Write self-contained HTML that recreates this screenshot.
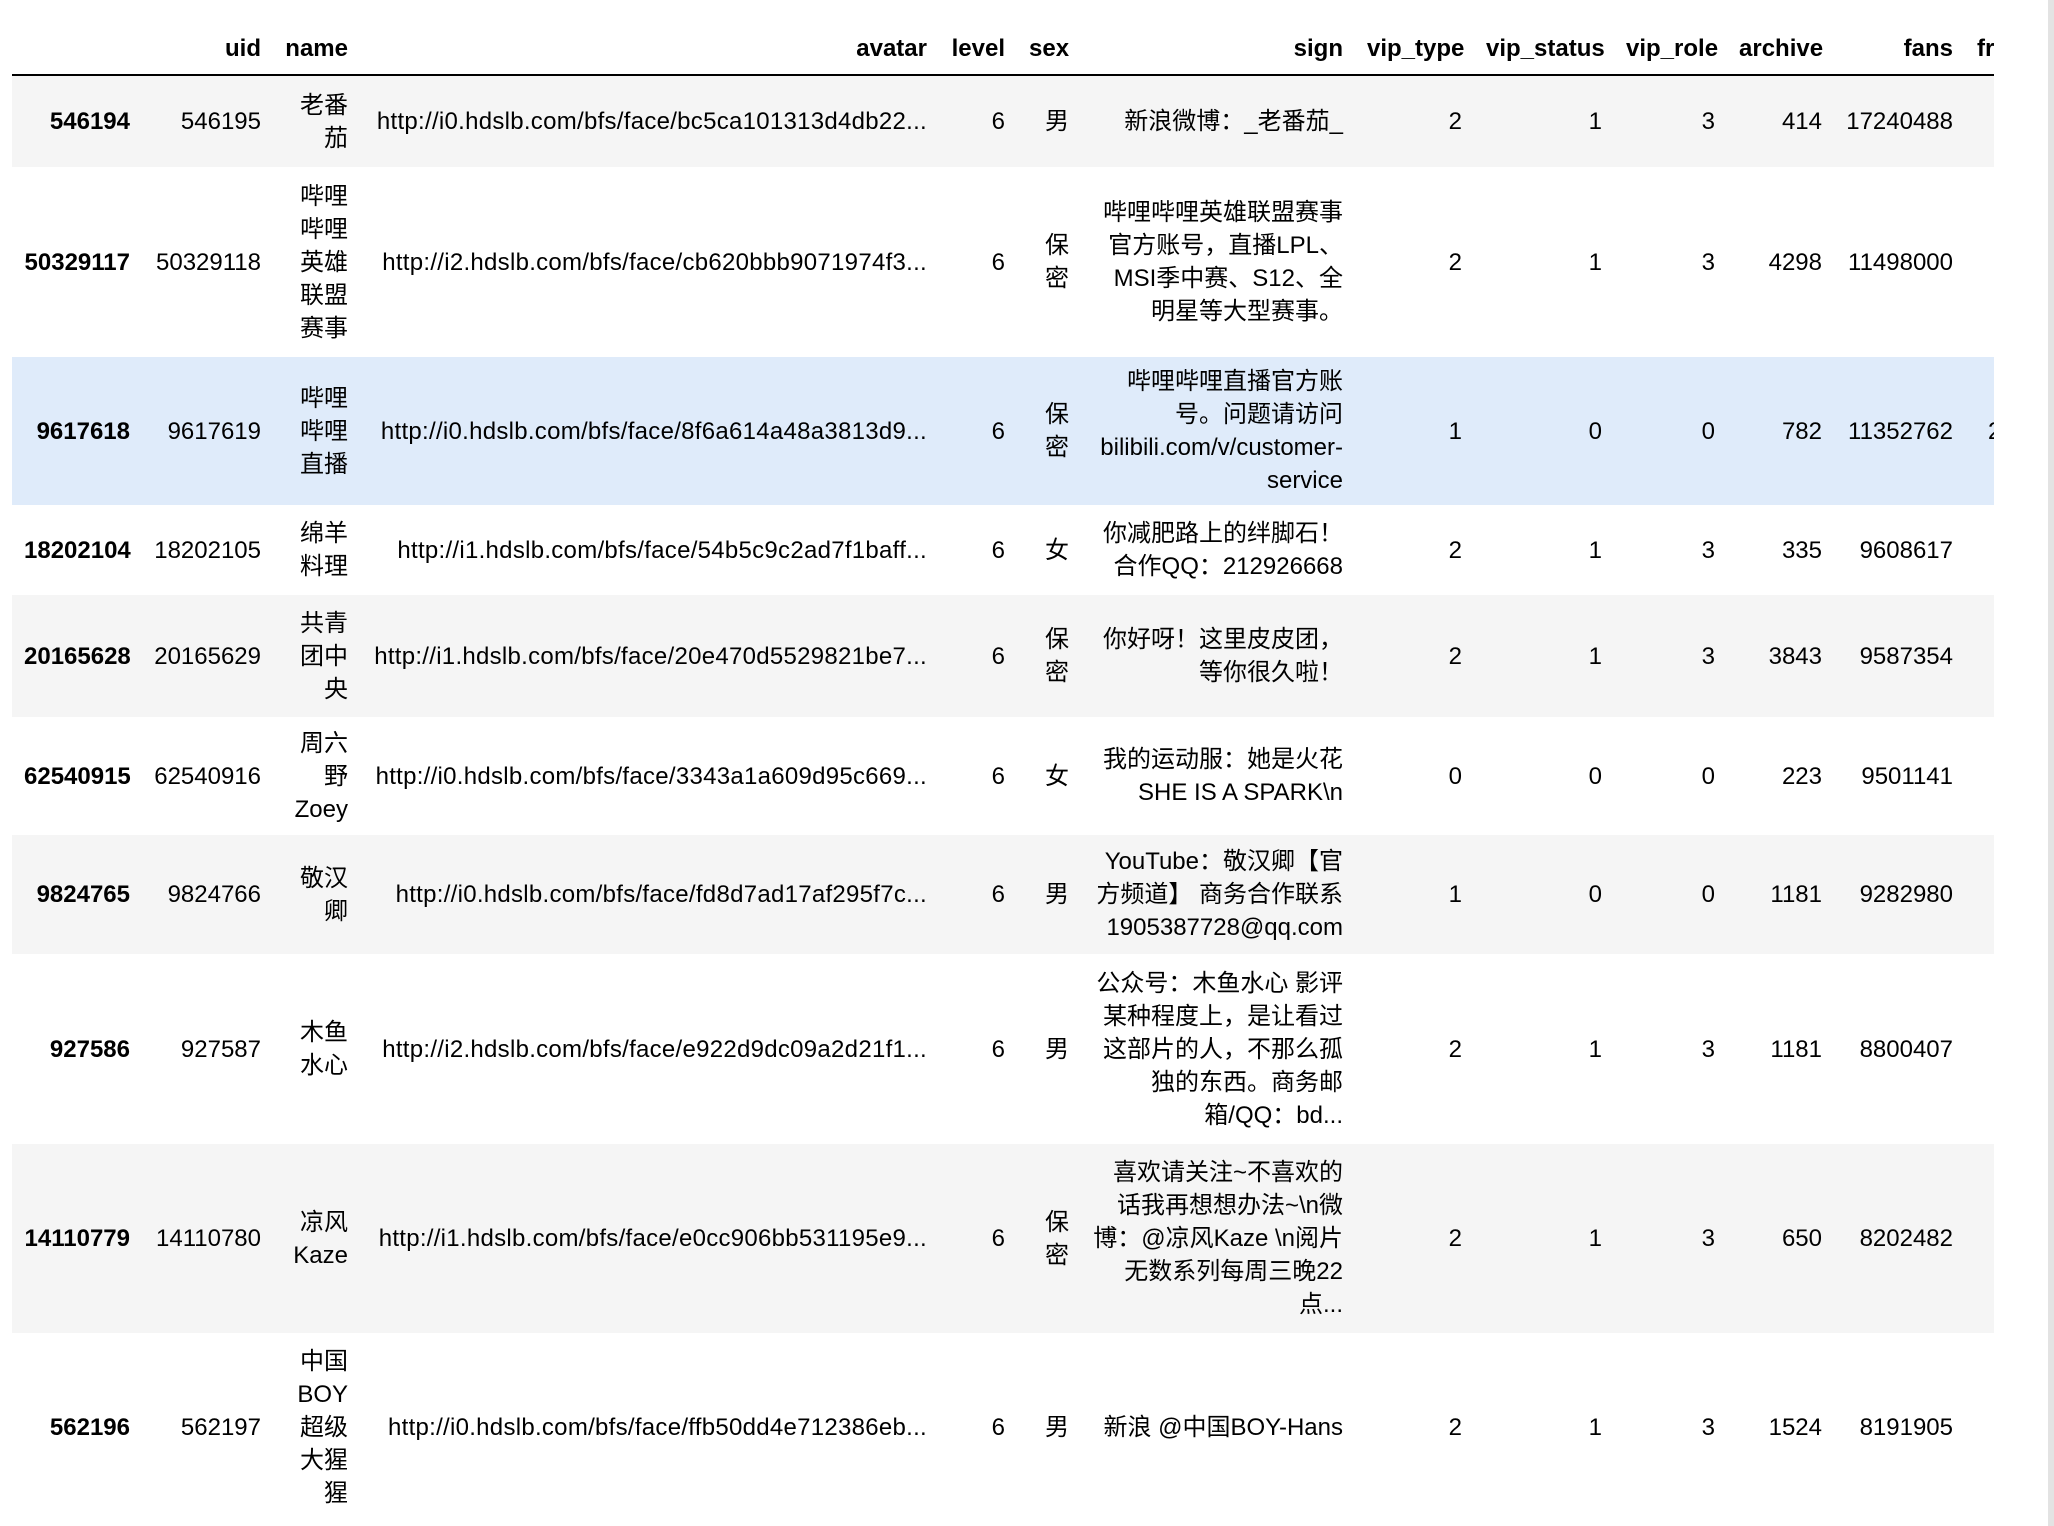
<!DOCTYPE html>
<html><head><meta charset="utf-8"><style>
html,body{margin:0;padding:0;background:#fff;width:2054px;height:1526px;overflow:hidden}
.wrap{position:absolute;left:12px;top:0;width:1982px;height:1526px;overflow:hidden}
.sb{position:absolute;left:2048px;top:0;width:6px;height:1526px;background:#e3e3e3}
table{border-collapse:collapse;table-layout:fixed;width:2100px;font-family:"Liberation Sans","Noto Sans CJK SC",sans-serif;font-size:24px;line-height:33px;color:#000}
td,th{padding:0 12px;text-align:right;vertical-align:middle;word-wrap:break-word}
thead th{height:63px;border-bottom:2px solid #000;vertical-align:bottom;padding-bottom:11px;padding-top:0;font-weight:bold;line-height:28px;white-space:nowrap;overflow:hidden}
tbody th{font-weight:bold;white-space:nowrap}
.nw{white-space:nowrap}
.av{white-space:nowrap;letter-spacing:0.28px}
tr.g{background:#f5f5f5}
tr.b{background:#dfebfa}
</style></head><body>
<div class="wrap">
<table>
<colgroup>
<col style="width:130px"><col style="width:131px"><col style="width:87px"><col style="width:579px"><col style="width:78px"><col style="width:64px"><col style="width:274px"><col style="width:119px"><col style="width:140px"><col style="width:113px"><col style="width:107px"><col style="width:131px"><col style="width:147px">
</colgroup>
<thead><tr><th></th><th>uid</th><th>name</th><th>avatar</th><th>level</th><th>sex</th><th>sign</th><th>vip_type</th><th>vip_status</th><th>vip_role</th><th>archive</th><th>fans</th><th style="text-align:left">friend</th></tr></thead>
<tbody>
<tr class="g" style="height:92px"><th>546194</th><td class="nw">546195</td><td>老番茄</td><td class="av">http://i0.hdslb.com/bfs/face/bc5ca101313d4db22...</td><td>6</td><td>男</td><td>新浪微博：_老番茄_</td><td>2</td><td>1</td><td>3</td><td>414</td><td>17240488</td><td></td></tr>
<tr style="height:190px"><th>50329117</th><td class="nw">50329118</td><td>哔哩哔哩英雄联盟赛事</td><td class="av">http://i2.hdslb.com/bfs/face/cb620bbb9071974f3...</td><td>6</td><td>保密</td><td>哔哩哔哩英雄联盟赛事官方账号，直播LPL、MSI季中赛、S12、全明星等大型赛事。</td><td>2</td><td>1</td><td>3</td><td>4298</td><td>11498000</td><td></td></tr>
<tr class="b" style="height:148px"><th>9617618</th><td class="nw">9617619</td><td>哔哩哔哩直播</td><td class="av">http://i0.hdslb.com/bfs/face/8f6a614a48a3813d9...</td><td>6</td><td>保密</td><td>哔哩哔哩直播官方账号。问题请访问bilibili.com/v/customer-service</td><td>1</td><td>0</td><td>0</td><td>782</td><td>11352762</td><td style="text-align:left;padding-left:23px">2</td></tr>
<tr style="height:90px"><th>18202104</th><td class="nw">18202105</td><td>绵羊料理</td><td class="av">http://i1.hdslb.com/bfs/face/54b5c9c2ad7f1baff...</td><td>6</td><td>女</td><td>你减肥路上的绊脚石！合作QQ：212926668</td><td>2</td><td>1</td><td>3</td><td>335</td><td>9608617</td><td></td></tr>
<tr class="g" style="height:122px"><th>20165628</th><td class="nw">20165629</td><td>共青团中央</td><td class="av">http://i1.hdslb.com/bfs/face/20e470d5529821be7...</td><td>6</td><td>保密</td><td>你好呀！这里皮皮团，等你很久啦！</td><td>2</td><td>1</td><td>3</td><td>3843</td><td>9587354</td><td></td></tr>
<tr style="height:118px"><th>62540915</th><td class="nw">62540916</td><td>周六野Zoey</td><td class="av">http://i0.hdslb.com/bfs/face/3343a1a609d95c669...</td><td>6</td><td>女</td><td>我的运动服：她是火花SHE IS A SPARK\n</td><td>0</td><td>0</td><td>0</td><td>223</td><td>9501141</td><td></td></tr>
<tr class="g" style="height:119px"><th>9824765</th><td class="nw">9824766</td><td>敬汉卿</td><td class="av">http://i0.hdslb.com/bfs/face/fd8d7ad17af295f7c...</td><td>6</td><td>男</td><td>YouTube：敬汉卿【官方频道】 商务合作联系1905387728@qq.com</td><td>1</td><td>0</td><td>0</td><td>1181</td><td>9282980</td><td></td></tr>
<tr style="height:190px"><th>927586</th><td class="nw">927587</td><td>木鱼水心</td><td class="av">http://i2.hdslb.com/bfs/face/e922d9dc09a2d21f1...</td><td>6</td><td>男</td><td>公众号：木鱼水心 影评 某种程度上，是让看过这部片的人，不那么孤独的东西。商务邮箱/QQ：bd...</td><td>2</td><td>1</td><td>3</td><td>1181</td><td>8800407</td><td></td></tr>
<tr class="g" style="height:189px"><th>14110779</th><td class="nw">14110780</td><td>凉风Kaze</td><td class="av">http://i1.hdslb.com/bfs/face/e0cc906bb531195e9...</td><td>6</td><td>保密</td><td>喜欢请关注~不喜欢的话我再想想办法~\n微博：@凉风Kaze \n阅片无数系列每周三晚22点...</td><td>2</td><td>1</td><td>3</td><td>650</td><td>8202482</td><td></td></tr>
<tr style="height:189px"><th>562196</th><td class="nw">562197</td><td>中国BOY超级大猩猩</td><td class="av">http://i0.hdslb.com/bfs/face/ffb50dd4e712386eb...</td><td>6</td><td>男</td><td>新浪 @中国BOY-Hans</td><td>2</td><td>1</td><td>3</td><td>1524</td><td>8191905</td><td></td></tr>
</tbody></table>
</div>
<div class="sb"></div>
</body></html>
